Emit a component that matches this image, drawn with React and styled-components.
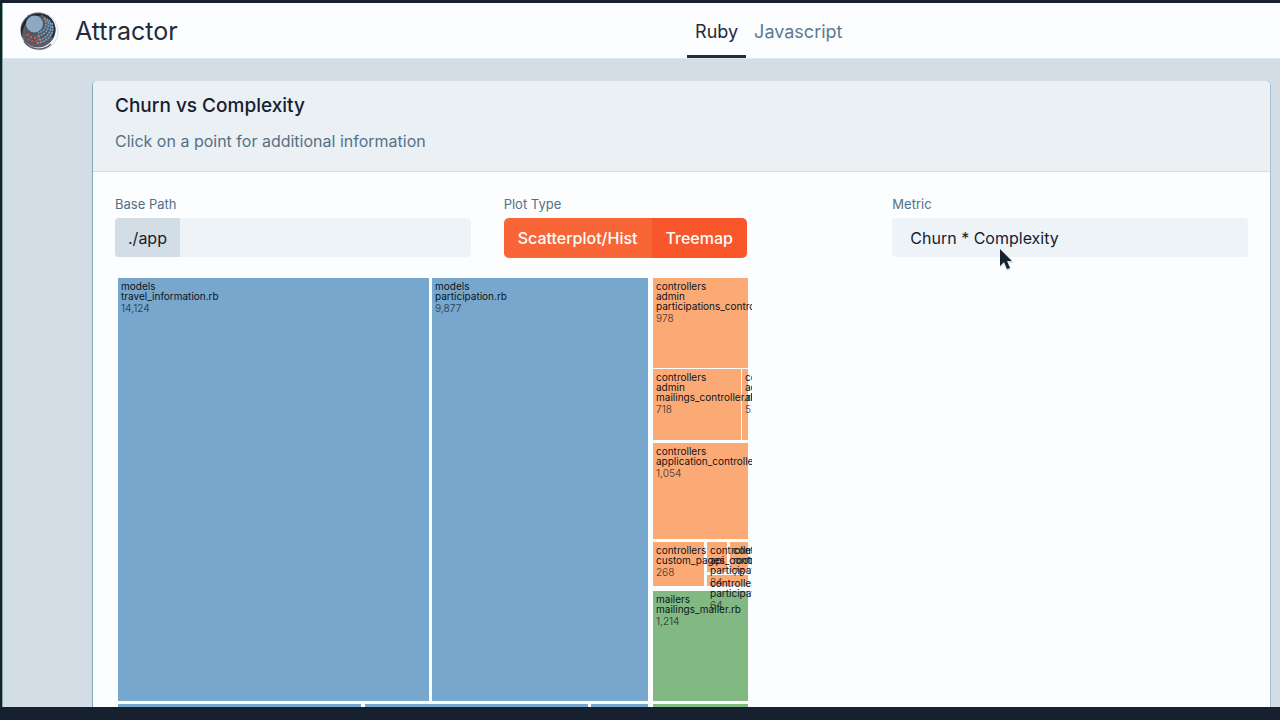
import React, { useState } from "react";
import styled, { createGlobalStyle, css } from "styled-components";

const GlobalStyle = createGlobalStyle`
  *, *::before, *::after { box-sizing: border-box; }
  body {
    margin: 0;
    background: #16202f;
    color: #16202f;
    font-family: Inter, "Liberation Sans", sans-serif;
    font-size: 16px;
  }
  button, input, select { font: inherit; color: inherit; }
`;

const Screen = styled.div`
  height: 100vh;
  padding: 3px 0 13px 2px;
  background: #16202f;
`;

const Page = styled.div`
  height: 100%;
  overflow: hidden;
  border-left: 1px solid #7fae98;
  background: #d3dde6;
`;

const Header = styled.header`
  display: grid;
  grid-template-columns: 15fr 13fr;
  height: 56px;
  background: #fbfdff;
  border-bottom: 1px solid #dfe7ee;
`;

const Brand = styled.a`
  display: flex;
  align-items: center;
  gap: 16px;
  padding-left: 16px;
  color: #242b3b;
  font-size: 25px;
  text-decoration: none;
`;

const Nav = styled.nav`
  display: flex;
`;

const Tab = styled.a`
  display: flex;
  align-items: center;
  padding: 4px 8px 0;
  border-bottom: 3px solid ${(p) => (p.$active ? "#2a2b3c" : "transparent")};
  color: ${(p) => (p.$active ? "#242b3b" : "#5a7b93")};
  font-size: 18px;
  text-decoration: none;
`;

const Card = styled.main`
  margin: 22px 10px 0 89px;
  min-height: 100%;
  border-left: 1px solid #7fabb5;
  border-radius: 5px 5px 0 0;
  overflow: hidden;
  background: #fbfdff;
  box-shadow: 1px 0 0 #a9c2d5;
`;

const CardHeader = styled.div`
  padding: 13px 22px 18px;
  border-bottom: 1px solid #d3dde6;
  background: #ebf0f5;
`;

const Title = styled.h1`
  margin: 0;
  font-size: 19px;
  line-height: 24px;
  font-weight: 500;
`;

const Subtitle = styled.p`
  margin: 11px 0 0;
  color: #567085;
  font-size: 16px;
  line-height: 24px;
`;

const CardBody = styled.div`
  padding: 22px;
`;

const Controls = styled.div`
  display: grid;
  grid-template-columns: repeat(3, 1fr);
  column-gap: 33px;
`;

const Field = styled.div`
  display: flex;
  flex-direction: column;
  align-items: flex-start;
  gap: 4px;
`;

const fieldLabel = css`
  color: #527086;
  font-size: 13px;
  line-height: 20px;
`;

const Label = styled.label`
  ${fieldLabel}
`;

const GroupLabel = styled.span`
  ${fieldLabel}
`;

const InputGroup = styled.div`
  display: flex;
  width: 100%;
  height: 39px;
  border-radius: 4px;
  overflow: hidden;
  background: #eef3f7;
`;

const Prefix = styled.span`
  display: flex;
  align-items: center;
  padding: 0 13px;
  background: #d3dde6;
`;

const TextInput = styled.input`
  flex: 1;
  min-width: 0;
  padding: 0 13px;
  border: 0;
  outline: 0;
  background: transparent;
`;

const ButtonGroup = styled.div`
  display: flex;
  height: 40px;
  border-radius: 5px;
  overflow: hidden;
`;

const PlotButton = styled.button`
  padding: 0 14px;
  border: 0;
  background: ${(p) => (p.$active ? "#f7572a" : "#f86638")};
  color: #fbfdff;
  font-weight: 500;
  cursor: pointer;
`;

const Select = styled.select`
  width: 100%;
  height: 39px;
  padding: 0 18px;
  border: 0;
  border-radius: 4px;
  appearance: none;
  background: #eef3f7;
`;

const Chart = styled.svg`
  display: block;
  margin-top: 17px;
  font-size: 10px;
`;

const Pointer = styled.svg`
  position: absolute;
  left: 998px;
  top: 248px;
  pointer-events: none;
`;

const BLUE = "#78a7ce";
const ORANGE = "#fcaa75";
const GREEN = "#82b881";

const cells = [
  { x: 3, y: 3, w: 311, h: 423, fill: BLUE, lines: ["models", "travel_information.rb"], value: "14,124" },
  { x: 317, y: 3, w: 216, h: 423, fill: BLUE, lines: ["models", "participation.rb"], value: "9,877" },
  { x: 538, y: 3, w: 95, h: 90, fill: ORANGE, lines: ["controllers", "admin", "participations_controller.rb"], value: "978" },
  { x: 538, y: 94, w: 88, h: 71, fill: ORANGE, lines: ["controllers", "admin", "mailings_controller.rb"], value: "718" },
  { x: 627, y: 94, w: 6, h: 71, fill: ORANGE, lines: ["controllers", "admin", "abilities_controller.rb"], value: "52" },
  { x: 538, y: 168, w: 95, h: 96, fill: ORANGE, lines: ["controllers", "application_controller.rb"], value: "1,054" },
  { x: 538, y: 267, w: 51, h: 44, fill: ORANGE, lines: ["controllers", "custom_pages_controller.rb"], value: "268" },
  { x: 592, y: 267, w: 20, h: 30, fill: ORANGE, lines: ["controllers", "api", "participations_controller.rb"], value: "84" },
  { x: 615, y: 267, w: 18, h: 30, fill: ORANGE, lines: ["controllers", "root_controller.rb"], value: "76" },
  { x: 592, y: 300, w: 41, h: 11, fill: ORANGE, lines: ["controllers", "participations_controller.rb"], value: "64" },
  { x: 538, y: 316, w: 95, h: 110, fill: GREEN, lines: ["mailers", "mailings_mailer.rb"], value: "1,214" },
  { x: 3, y: 429, w: 243, h: 60, fill: BLUE, lines: [] },
  { x: 250, y: 429, w: 223, h: 60, fill: BLUE, lines: [] },
  { x: 476, y: 429, w: 57, h: 60, fill: BLUE, lines: [] },
  { x: 538, y: 429, w: 95, h: 60, fill: GREEN, lines: [] },
];

function CellLabel({ cell }) {
  const { x, y, lines, value } = cell;
  return (
    <text fill="#0c1420">
      {lines.map((line, i) => (
        <tspan key={line} x={x + 3} y={y + 12 + i * 10}>{line}</tspan>
      ))}
      {value && (
        <tspan x={x + 3} y={y + 14 + lines.length * 10} fillOpacity="0.7">{value}</tspan>
      )}
    </text>
  );
}

function Logo() {
  return (
    <svg width="40" height="40" viewBox="0 0 40 40" fill="none" aria-hidden="true">
      <circle cx="20.500" cy="20.500" r="18.500" stroke="#d3dde6" />
      <path d="M5 30c6 9 19 11 27 3" stroke="#5d5d68" strokeWidth="1.500" />
      <circle cx="19" cy="19" r="17.500" fill="#5f5b66" />
      <path d="M3 26A17.500 17.500 0 0 1 33 9C24 2 12 4 7 12c-3 5-4 9-4 14z" fill="#1c2433" />
      <path d="M27 5c8 4 11 14 6 22" stroke="#27303f" strokeWidth="2" />
      <circle cx="19" cy="18" r="13" fill="#4f5866" />
      <g stroke="#78a7ce" strokeWidth="1.500" strokeDasharray="2 1">
        <path d="M28 8c4 7 0 16-10 17" />
        <path d="M30 9c5 9-1 19-12 20" />
        <path d="M33 12c3 10-4 19-15 20" />
        <path d="M25 7c4 6 2 13-6 15" />
      </g>
      <g stroke="#f7572a" strokeDasharray="2 2">
        <path d="M8 23c4 5 10 5 15 1" strokeWidth="2" />
        <path d="M9 28c5 3 11 3 15 0" />
        <path d="M22 4c5 2 7 7 6 13" />
      </g>
      <circle cx="15.500" cy="13" r="8.500" fill="#83aac9" />
      <g stroke="#f0a077" strokeDasharray="1 2">
        <path d="M10 8h11M9 11h14M8 14h14M9 17h12M12 20h7" />
      </g>
    </svg>
  );
}

export default function App() {
  const [plot, setPlot] = useState("treemap");
  return (
    <>
      <GlobalStyle />
      <Screen>
        <Page>
          <Header>
            <Brand href="#"><Logo />Attractor</Brand>
            <Nav>
              <Tab href="#ruby" $active>Ruby</Tab>
              <Tab href="#javascript">Javascript</Tab>
            </Nav>
          </Header>
          <Card>
            <CardHeader>
              <Title>Churn vs Complexity</Title>
              <Subtitle>Click on a point for additional information</Subtitle>
            </CardHeader>
            <CardBody>
              <Controls>
                <Field>
                  <Label htmlFor="base-path">Base Path</Label>
                  <InputGroup>
                    <Prefix>./app</Prefix>
                    <TextInput id="base-path" type="text" />
                  </InputGroup>
                </Field>
                <Field role="group" aria-labelledby="plot-type">
                  <GroupLabel id="plot-type">Plot Type</GroupLabel>
                  <ButtonGroup>
                    <PlotButton type="button" $active={plot === "scatter"} onClick={() => setPlot("scatter")}>Scatterplot/Hist</PlotButton>
                    <PlotButton type="button" $active={plot === "treemap"} onClick={() => setPlot("treemap")}>Treemap</PlotButton>
                  </ButtonGroup>
                </Field>
                <Field>
                  <Label htmlFor="metric">Metric</Label>
                  <Select id="metric" defaultValue="product">
                    <option value="product">Churn * Complexity</option>
                  </Select>
                </Field>
              </Controls>
              <Chart width="637" height="489" role="img" aria-label="Treemap of churn times complexity">
                {cells.map(({ x, y, w, h, fill }) => (
                  <rect key={`${x}-${y}`} x={x} y={y} width={w} height={h} fill={fill} />
                ))}
                {cells.map((cell) => <CellLabel key={`${cell.x}-${cell.y}`} cell={cell} />)}
              </Chart>
            </CardBody>
          </Card>
        </Page>
      </Screen>
      <Pointer width="18" height="26" viewBox="0 0 18 26" aria-hidden="true">
        <path d="M2 2v18l4-4 3 7 4-2-3-6h6z" fill="#d3dde6" />
        <path d="M2 1v17l4-4 3 7 3-1-3-7h5z" fill="#16202f" />
      </Pointer>
    </>
  );
}
